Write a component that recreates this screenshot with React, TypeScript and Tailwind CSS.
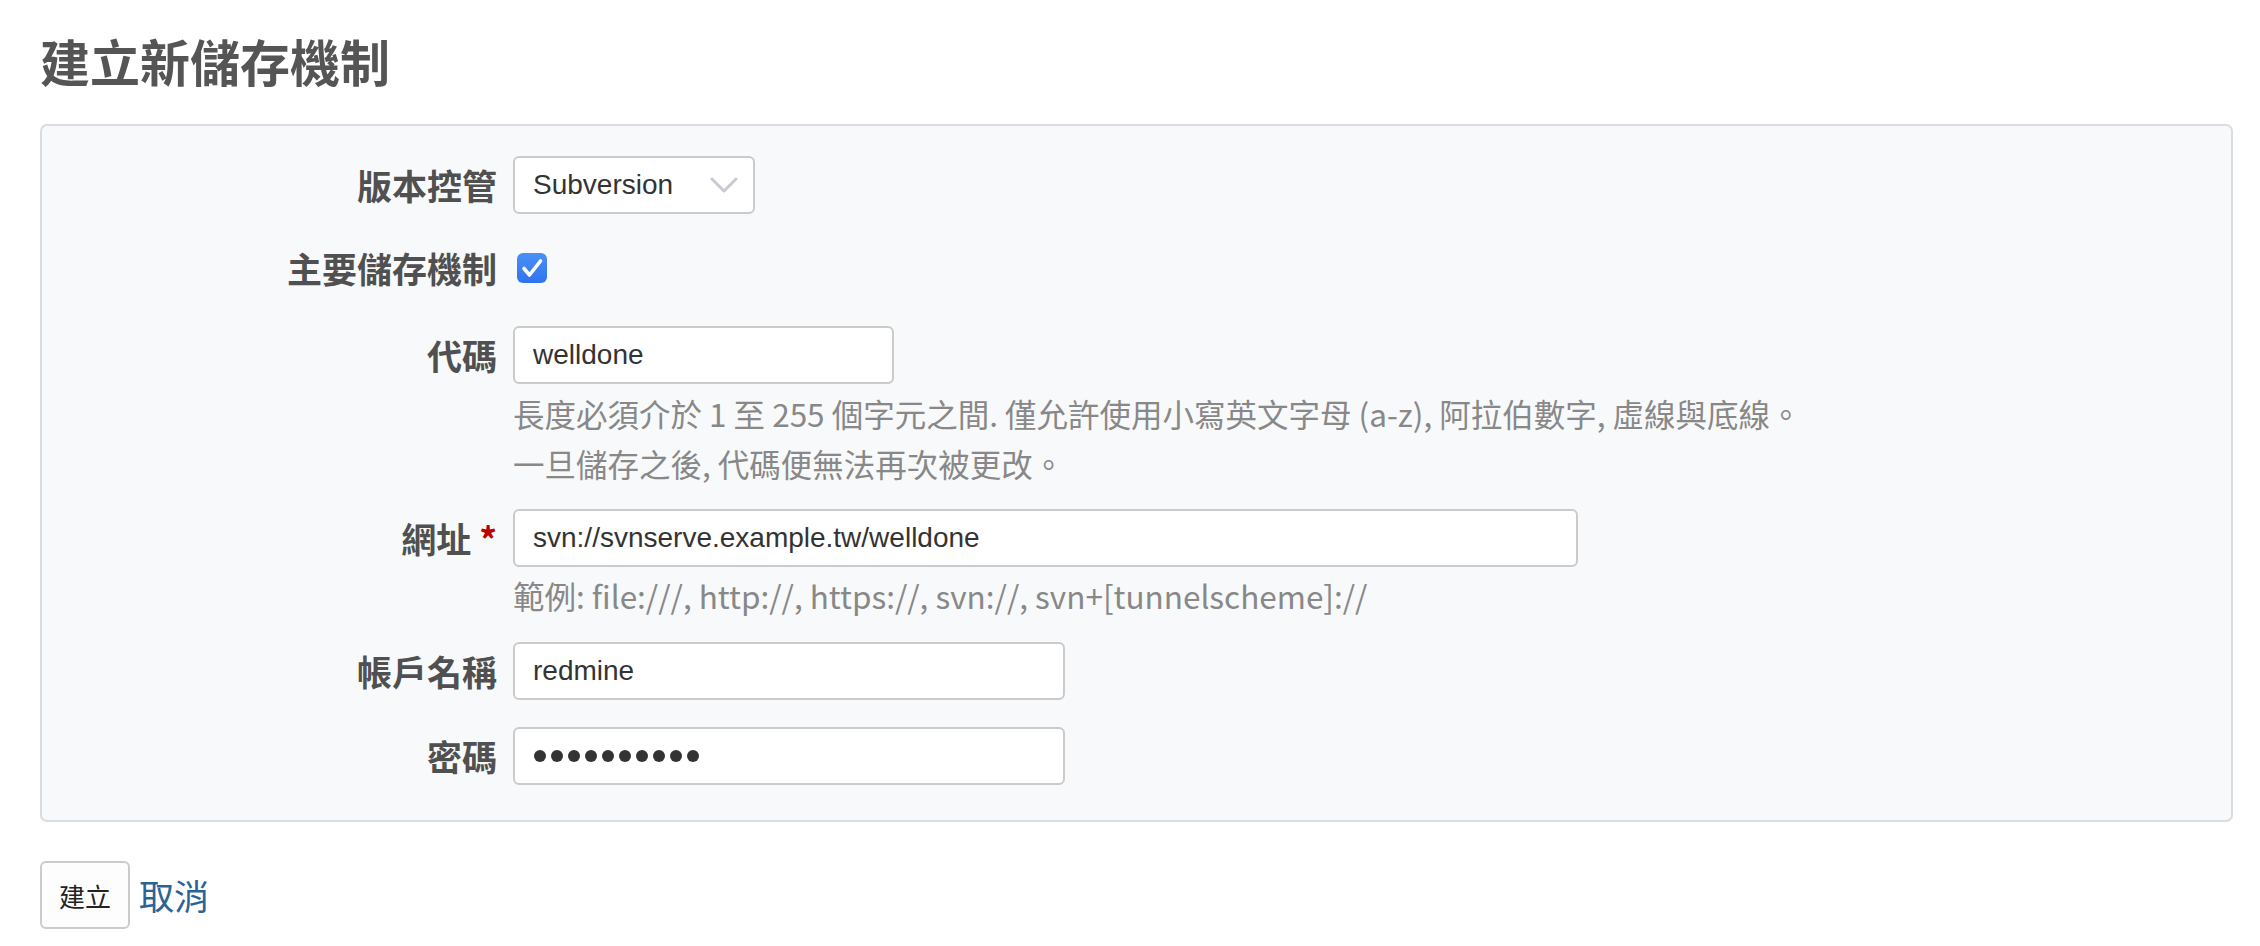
import React from 'react';

const cjk = "font-['Noto_Sans_CJK_TC',sans-serif]";
const latin = "font-['Liberation_Sans',Arial,sans-serif]";

const Label = ({ children }: { children: React.ReactNode }) => (
  <label className={`w-[455px] shrink-0 text-right text-[35px] font-bold leading-[58px] text-[#505050] ${cjk}`}>
    {children}
  </label>
);

const TextInput = ({ value, width }: { value: string; width: string }) => (
  <input
    type="text"
    defaultValue={value}
    className={`${width} h-[58px] rounded-[6px] border-2 border-[#cbcbcb] bg-white px-[18px] text-[28px] text-[#333] outline-none ${latin}`}
  />
);

const Hint = ({ children }: { children: React.ReactNode }) => (
  <p className={`text-[31.5px] leading-[50px] text-[#888] ${cjk}`}>{children}</p>
);

export default function App() {
  return (
    <div className="min-h-screen bg-white pl-[40px] pr-[27px] pt-[35px]">
      <h2 className={`text-[50px] font-bold leading-[50px] text-[#555] ${cjk}`}>建立新儲存機制</h2>

      <div className="mt-[39px] rounded-[7px] border-2 border-[#d9dce1] bg-[#f8f9fa] pt-[30px] pb-[35px]">
        {/* 版本控管 */}
        <div className="flex items-start">
          <Label>版本控管</Label>
          <div className="relative ml-[16px]">
            <select
              defaultValue="Subversion"
              className={`h-[58px] w-[242px] appearance-none rounded-[6px] border-2 border-[#cbcbcb] bg-white pl-[18px] text-[28px] text-[#333] outline-none ${latin}`}
            >
              <option>Subversion</option>
              <option>Git</option>
              <option>Mercurial</option>
            </select>
            <svg
              className="pointer-events-none absolute right-[17px] top-[21px]"
              width="28"
              height="16"
              viewBox="0 0 28 16"
              fill="none"
            >
              <path d="M2 2 L14 14 L26 2" stroke="#c9c9d3" strokeWidth="3" strokeLinecap="round" strokeLinejoin="round" />
            </svg>
          </div>
        </div>

        {/* 主要儲存機制 */}
        <div className="mt-[25px] flex items-center">
          <Label>主要儲存機制</Label>
          <span className="ml-[20px] flex h-[30px] w-[30px] items-center justify-center rounded-[6px] bg-gradient-to-b from-[#4a90f8] to-[#2f74ee]">
            <svg width="30" height="30" viewBox="0 0 30 30" fill="none">
              <path d="M7 15.5 L12.5 22 L23.5 8" stroke="white" strokeWidth="3.6" strokeLinecap="round" strokeLinejoin="round" />
            </svg>
          </span>
        </div>

        {/* 代碼 */}
        <div className="mt-[29px] flex items-start">
          <Label>代碼</Label>
          <div className="ml-[16px]">
            <TextInput value="welldone" width="w-[381px]" />
            <div className="mt-[4px]">
              <Hint>長度必須介於 1 至 255 個字元之間. 僅允許使用小寫英文字母 (a-z), 阿拉伯數字, 虛線與底線。</Hint>
              <Hint>一旦儲存之後, 代碼便無法再次被更改。</Hint>
            </div>
          </div>
        </div>

        {/* 網址 */}
        <div className="mt-[21px] flex items-start">
          <Label>
            網址 <span className="text-[#bb0000]">*</span>
          </Label>
          <div className="ml-[16px]">
            <TextInput value="svn://svnserve.example.tw/welldone" width="w-[1065px]" />
            <div className="mt-[3px]">
              <Hint>範例: file:///, http://, https://, svn://, svn+[tunnelscheme]://</Hint>
            </div>
          </div>
        </div>

        {/* 帳戶名稱 */}
        <div className="mt-[22px] flex items-start">
          <Label>帳戶名稱</Label>
          <div className="ml-[16px]">
            <TextInput value="redmine" width="w-[552px]" />
          </div>
        </div>

        {/* 密碼 */}
        <div className="mt-[27px] flex items-start">
          <Label>密碼</Label>
          <div className="ml-[16px] flex h-[58px] w-[552px] items-center gap-[5px] rounded-[6px] border-2 border-[#cbcbcb] bg-white pl-[19px]">
            {Array.from({ length: 10 }).map((_, i) => (
              <span key={i} className="h-[12px] w-[12px] rounded-full bg-[#333]" />
            ))}
          </div>
        </div>
      </div>

      <div className="mt-[39px] flex items-center">
        <button
          type="button"
          className={`h-[68px] w-[90px] rounded-[6px] border-2 border-[#cbcbcb] bg-[#fdfdfd] text-[26px] text-[#222] ${cjk}`}
        >
          建立
        </button>
        <a href="#" className={`ml-[9px] text-[35px] leading-[50px] text-[#2a6396] ${cjk}`}>
          取消
        </a>
      </div>
    </div>
  );
}
